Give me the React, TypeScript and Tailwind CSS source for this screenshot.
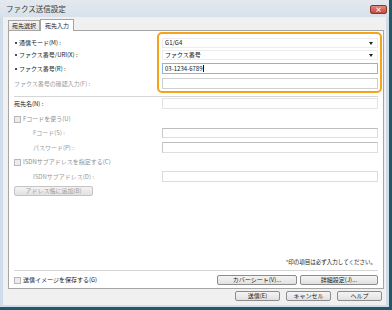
import React from 'react';

const font = "font-['Noto_Sans_CJK_JP','Noto_Sans',sans-serif]";

function Dot() {
  return <span className="inline-block w-[2px] h-[2px] bg-[#111] rounded-full ml-[1px] mr-[2px]" />;
}

function Select({ value }: { value: string }) {
  return (
    <div className="w-[216px] h-full bg-white border border-[#ececec] flex items-center justify-between pl-[2px] pr-[4px]">
      <span className="text-[6px] leading-none text-[#111]">{value}</span>
      <span className="w-0 h-0 border-l-[2px] border-r-[2px] border-t-[3px] border-l-transparent border-r-transparent border-t-[#222]" />
    </div>
  );
}

function Field({ className = '', children }: { className?: string; children?: React.ReactNode }) {
  return <div className={`w-[216px] h-full bg-white border flex items-center pl-[2px] ${className}`}>{children}</div>;
}

function Checkbox({ label, disabled }: { label: string; disabled?: boolean }) {
  return (
    <div className="flex items-center">
      <span className="w-[7px] h-[7px] border border-[#b8b8b8] bg-[#ececec]" />
      <span className={`ml-[2px] text-[6px] leading-none ${disabled ? 'text-[#8e8e8e]' : 'text-[#1a1a1a]'}`}>{label}</span>
    </div>
  );
}

function Button({ label, className = '', disabled }: { label: string; className?: string; disabled?: boolean }) {
  return (
    <div
      className={`h-full flex items-center justify-center rounded-[2px] border bg-gradient-to-b from-[#f4f4f4] to-[#e1e1e1] text-[6px] leading-none ${
        disabled ? 'border-[#c4c4c4] text-[#9d9d9d]' : 'border-[#8c8c8c] text-[#1a1a1a]'
      } ${className}`}
    >
      {label}
    </div>
  );
}

export default function App() {
  return (
    <div className={`w-[392px] h-[310px] bg-[#23586a] overflow-hidden ${font}`}>
      <div className="w-[389px] h-[307px] bg-[#cfdcea] flex flex-col relative">
        {/* Title bar */}
        <div className="h-[17px] flex items-center pl-[6px] bg-gradient-to-b from-[#e4e9ef] to-[#d8e1ea]">
          <span className="text-[7.5px] leading-none text-[#3a3a3a]">ファクス送信設定</span>
        </div>
        <div className="absolute right-[2px] top-[5px] w-[17px] h-[9px] rounded-[2px] border border-[#8a3a32] bg-gradient-to-b from-[#dc8a7e] to-[#c24a3c] flex items-center justify-center">
          <span className="text-[7px] leading-none text-white font-bold">×</span>
        </div>

        {/* Body */}
        <div className="flex-1 mx-[3px] mb-[2px] bg-[#f0f0f0] flex flex-col pl-[5px] pr-[2px]">
          {/* Tabs */}
          <div className="h-[13px] flex items-end">
            <div className="w-[32px] h-[10px] border border-b-0 border-[#a5a5a5] bg-gradient-to-b from-[#f6f6f6] to-[#e4e4e4] flex items-center justify-center">
              <span className="text-[6px] leading-none text-[#1a1a1a]">宛先選択</span>
            </div>
            <div className="w-[34px] h-[12px] border border-b-0 border-[#a5a5a5] bg-white -mb-px relative z-10 flex items-center justify-center">
              <span className="text-[6px] leading-none text-[#1a1a1a]">宛先入力</span>
            </div>
          </div>

          {/* Panel */}
          <div className="relative h-[259px] border border-[#a5a5a5] bg-white flex flex-col px-[5px] pt-[7px] pb-[3px]">
            <div className="h-[10px] flex items-center justify-between">
              <span className="flex items-center text-[6px] leading-none text-[#1a1a1a]"><Dot />通信モード(M) :</span>
              <Select value="G1/G4" />
            </div>
            <div className="h-[10px] mt-[2px] flex items-center justify-between">
              <span className="flex items-center text-[6px] leading-none text-[#1a1a1a]"><Dot />ファクス番号/URI(X) :</span>
              <Select value="ファクス番号" />
            </div>
            <div className="h-[11px] mt-[3px] flex items-center justify-between">
              <span className="flex items-center text-[6px] leading-none text-[#1a1a1a]"><Dot />ファクス番号(R) :</span>
              <Field className="border-[#86b6e6]">
                <span className="text-[6px] leading-none text-[#111]">03-1234-6789</span>
                <span className="w-px h-[7px] bg-[#111] ml-[1px]" />
              </Field>
            </div>
            <div className="h-[11px] mt-[4px] flex items-center justify-between">
              <span className="text-[6px] leading-none text-[#9a9a9a]">ファクス番号の確認入力(F) :</span>
              <Field className="border-[#cfcfcf]" />
            </div>

            <div className="h-px mt-[7px] bg-[#d6d6d6]" />

            <div className="h-[11px] mt-[1px] flex items-center justify-between">
              <span className="text-[6px] leading-none text-[#1a1a1a]">宛先名(N) :</span>
              <Field className="border-[#e4e4e4] bg-[#fcfcfc]" />
            </div>
            <div className="h-[10px] mt-[5px] flex items-center">
              <Checkbox label="Fコードを使う(U)" disabled />
            </div>
            <div className="h-[10px] mt-[4px] flex items-center justify-between">
              <span className="pl-[19px] text-[6px] leading-none text-[#9a9a9a]">Fコード(S) :</span>
              <Field className="border-[#dedede] border-t-[#bdbdbd] border-l-[#c8c8c8]" />
            </div>
            <div className="h-[11px] mt-[4px] flex items-center justify-between">
              <span className="pl-[19px] text-[6px] leading-none text-[#9a9a9a]">パスワード(P) :</span>
              <Field className="border-[#dedede] border-t-[#bdbdbd] border-l-[#c8c8c8]" />
            </div>
            <div className="h-[10px] mt-[4px] flex items-center">
              <Checkbox label="ISDNサブアドレスを指定する(C)" disabled />
            </div>
            <div className="h-[11px] mt-[4px] flex items-center justify-between">
              <span className="pl-[19px] text-[6px] leading-none text-[#9a9a9a]">ISDNサブアドレス(D) :</span>
              <Field className="border-[#dcdcdc]" />
            </div>
            <div className="h-[10px] mt-[4px] flex">
              <Button label="アドレス帳に追加(B)" disabled className="w-[79px]" />
            </div>

            <div className="flex-1" />

            <div className="h-[10px] flex items-center justify-end pr-[2px]">
              <span className="text-[5.5px] leading-none text-[#1a1a1a]">*印の項目は必ず入力してください。</span>
            </div>
            <div className="h-px mt-[2px] bg-[#d6d6d6]" />
            <div className="h-[10px] mt-[4px] flex items-center justify-between">
              <Checkbox label="送信イメージを保存する(G)" />
              <div className="h-full flex gap-[3px]">
                <Button label="カバーシート(V)..." className="w-[80px]" />
                <Button label="詳細設定(J)..." className="w-[78px]" />
              </div>
            </div>

            {/* highlight */}
            <div className="absolute left-[148px] top-px w-[225px] h-[61px] border-2 border-[#f5a31a] rounded-[5px]" />
          </div>

          {/* Dialog buttons */}
          <div className="h-[10px] mt-[2px] flex justify-end gap-[6px] pr-[2px]">
            <Button label="送信(E)" className="w-[45px] border-[#3d7bad]" />
            <Button label="キャンセル" className="w-[45px]" />
            <Button label="ヘルプ" className="w-[45px]" />
          </div>
        </div>
      </div>
    </div>
  );
}
